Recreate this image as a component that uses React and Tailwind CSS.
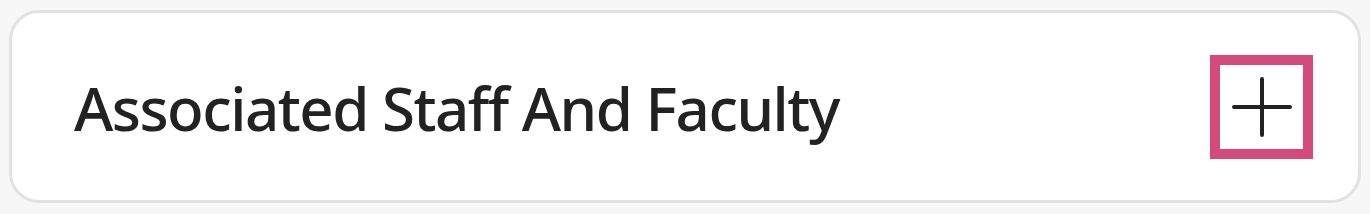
export default function App() {
  return (
    <div className="h-[214px] w-[1370px] bg-[#f7f7f7] px-[9px] pt-[10px] pb-[11px]">
      <div className="flex h-full items-center justify-between rounded-[30px] border-[3px] border-[#e2e2e2] bg-white pl-[62px] pr-[45px]">
        <h2
          className="text-[60px] font-medium text-[#222] leading-none tracking-[-1.5px] pt-[2px]"
          style={{ fontFamily: '"Noto Sans", "Open Sans", sans-serif' }}
        >
          Associated Staff And Faculty
        </h2>
        <button className="flex h-[104px] w-[103px] items-center justify-center border-[10px] border-[#d34a7b] bg-white">
          <svg width="62" height="62" viewBox="0 0 62 62" fill="none">
            <path d="M31 3v56M3 31h56" stroke="#222" strokeWidth="4" strokeLinecap="round" />
          </svg>
        </button>
      </div>
    </div>
  )
}
